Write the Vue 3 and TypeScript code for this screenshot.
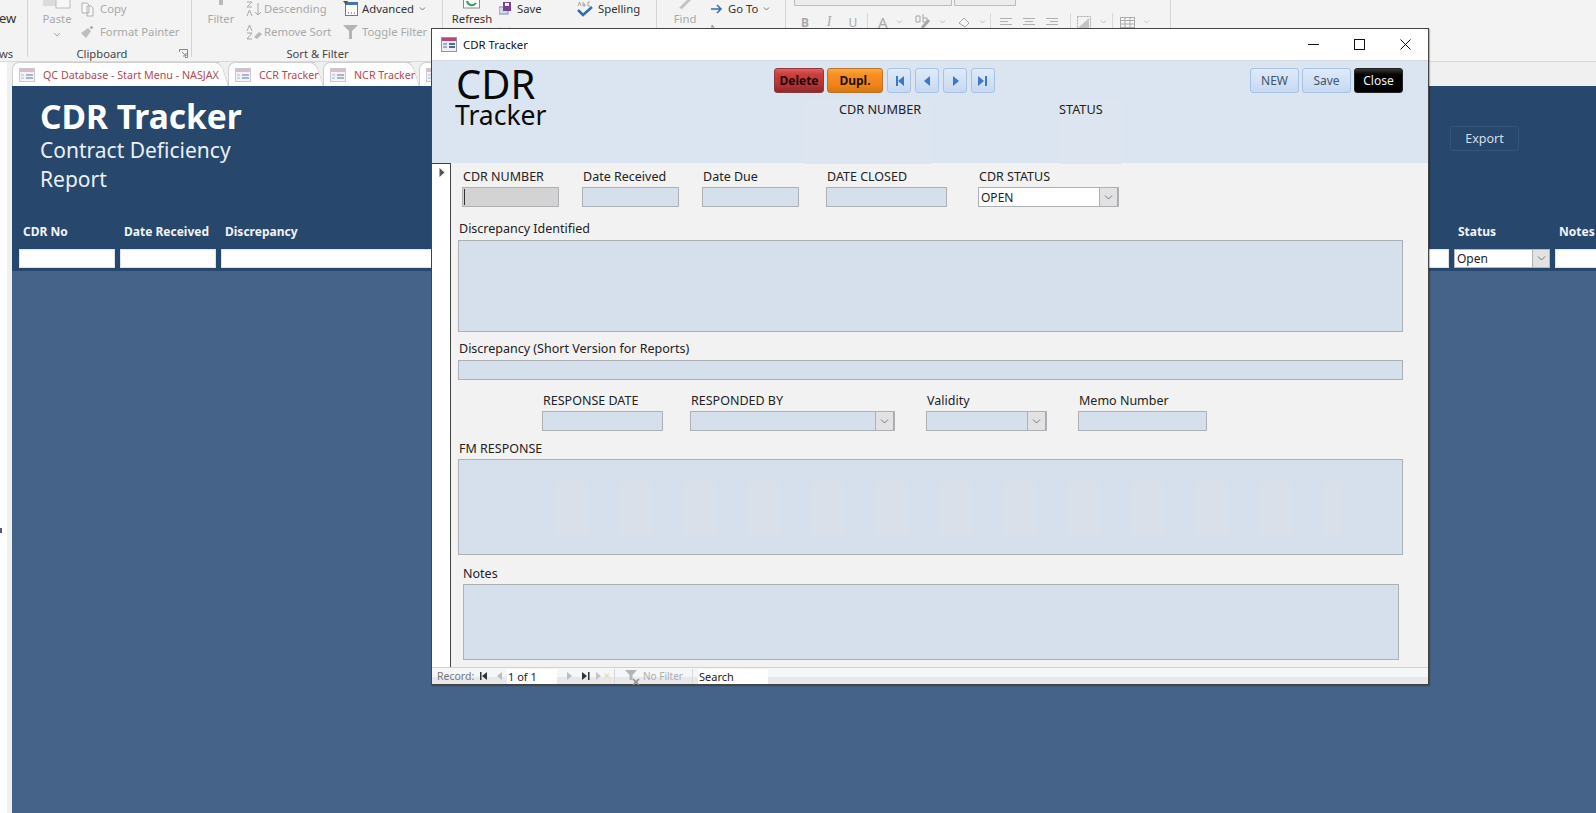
<script setup lang="ts">
interface Tab { label: string; cls: string }
const tabs: Tab[] = [
  { label: 'QC Database - Start Menu - NASJAX', cls: 't1' },
  { label: 'CCR Tracker', cls: 't2' },
  { label: 'NCR Tracker', cls: 't3' },
  { label: '', cls: 't4' },
]
const navIcons: string[] = ['M5 3h2v10H5zM13 3v10L7 8z', 'M11 3v10L5 8z', 'M6 3v10l6-5z', 'M3 3v10l6-5zM10 3h2v10h-2z']
</script>

<template>
  <div class="app">
    <header class="ribbon">
      <section class="group g-views">
        <div class="content"><span class="cut-text dark">ew</span></div>
        <div class="glabel left">ws</div>
      </section>
      <section class="group g-clip">
        <div class="content">
          <div class="bigcol paste">
            <svg class="bigicon" width="28" height="9" viewBox="0 0 28 9"><rect x="0" y="0" width="14" height="6" fill="#dcdcdc"/><rect x="13" y="-4" width="14" height="12" fill="#f7f7f7" stroke="#bcbcbc"/></svg>
            <span class="dis">Paste</span>
            <svg class="chev" width="8" height="5" viewBox="0 0 8 5"><path d="M1 1l3 3 3-3" fill="none" stroke="#aaa"/></svg>
          </div>
          <div class="rows">
            <div class="ritem"><svg class="ic" width="15" height="16" viewBox="0 0 15 16"><path d="M2 2h5l2 2v8H2zM7 5h4l2 2v8H7z" fill="#f8f8f8" stroke="#b0b0b0"/></svg><span class="dis">Copy</span></div>
            <div class="ritem"><svg class="ic" width="15" height="14" viewBox="0 0 15 14"><path d="M1 8l7-5 3 3-5 7z" fill="#bdbdbd"/><path d="M10 2l2-1 1 2-2 1z" fill="#999"/></svg><span class="dis">Format Painter</span></div>
          </div>
        </div>
        <div class="glabel clipl">Clipboard</div>
        <svg class="launcher" width="9" height="9" viewBox="0 0 9 9"><path d="M.5 3V.5H8.500V8.500H6M3 3l4 4M7 4v3H4" fill="none" stroke="#888"/></svg>
      </section>
      <section class="group g-sort">
        <div class="content">
          <div class="bigcol filter">
            <svg class="bigicon" width="10" height="9" viewBox="0 0 10 9"><rect x="3" y="0" width="4" height="5" fill="#b9b9b9"/></svg>
            <span class="dis">Filter</span>
          </div>
          <div class="rows sortrows">
            <div class="ritem"><svg class="ic wide" width="17" height="16" viewBox="0 0 17 16"><path d="M1 1h5L1 6h5M1 15l2.500-6L6 15" fill="none" stroke="#a8a8a8"/><path d="M12 2v12M9 11l3 3 3-3" fill="none" stroke="#a8a8a8"/></svg><span class="dis">Descending</span></div>
            <div class="ritem"><svg class="ic wide" width="17" height="16" viewBox="0 0 17 16"><path d="M1 7l2.500-6L6 7M1 9h5l-5 6h5" fill="none" stroke="#a8a8a8"/><path d="M8 13l5-5 3 2-5 5z" fill="#b8b8b8"/></svg><span class="dis">Remove Sort</span></div>
          </div>
          <div class="rows advrows">
            <div class="ritem"><svg class="ic" width="15" height="15" viewBox="0 0 15 15"><rect x="2.500" y="1.500" width="12" height="13" fill="#fff" stroke="#777"/><rect x="2" y="1" width="13" height="3" fill="#3f74ad"/><path d="M5 12h1M8 12h1M11 12h1" stroke="#444"/><path d="M0 0h5L3 4z" fill="#555"/></svg><span class="dark">Advanced</span><svg class="mini" width="7" height="4" viewBox="0 0 7 4"><path d="M1 .5l2.500 2.500L6 .5" fill="none" stroke="#777"/></svg></div>
            <div class="ritem"><svg class="ic" width="15" height="14" viewBox="0 0 15 14"><path d="M0 0h15L9 6v8H6V6z" fill="#b4b4b4"/></svg><span class="dis">Toggle Filter</span></div>
          </div>
        </div>
        <div class="glabel">Sort &amp; Filter</div>
      </section>
      <section class="group g-rec">
        <div class="content">
          <div class="bigcol refresh">
            <svg class="bigicon" width="18" height="9" viewBox="0 0 18 9"><rect x=".5" y="-4" width="16" height="12" fill="#fff" stroke="#888"/><path d="M4 1a5 5 0 0 0 9 2" fill="none" stroke="#3f9a62" stroke-width="2"/></svg>
            <span class="dark">Refresh</span>
          </div>
          <div class="rows recrows">
            <div class="ritem"><svg class="ic" width="13" height="14" viewBox="0 0 13 14"><rect x="0" y="5" width="9" height="7" fill="#cfdcec" stroke="#7a8fa8"/><rect x="4" y="0" width="8" height="9" fill="#7b3f98"/><rect x="6" y="1" width="4" height="3" fill="#fff"/></svg><span class="dark">Save</span></div>
            <div class="ritem"><svg class="ic" width="13" height="12" viewBox="0 0 13 12"><path d="M1 2l10 8M11 2L1 10" stroke="#c0c0c0" stroke-width="2"/></svg></div>
          </div>
          <div class="rows spellrows">
            <div class="ritem"><svg class="ic" width="16" height="16" viewBox="0 0 16 16"><path d="M1 5l1.500-4L4 5M6 1v4h2V3H6M13 1h-2v4h2" fill="none" stroke="#888" stroke-width=".7"/><path d="M1 9l5 5 9-8" fill="none" stroke="#2f6db5" stroke-width="2.500"/></svg><span class="dark">Spelling</span></div>
            <div class="ritem"><svg class="ic" width="16" height="14" viewBox="0 0 16 14"><rect x=".5" y="3.500" width="15" height="10" fill="#f7f7f7" stroke="#999"/><path d="M1 7h14M6 4v9" stroke="#999"/></svg></div>
          </div>
        </div>
      </section>
      <section class="group g-find">
        <div class="content">
          <div class="bigcol findcol">
            <svg class="bigicon" width="14" height="9" viewBox="0 0 14 9"><path d="M1 8l8-8h4L4 9z" fill="#c2c2c2"/></svg>
            <span class="dis">Find</span>
          </div>
          <div class="rows findrows">
            <div class="ritem"><svg class="ic" width="12" height="10" viewBox="0 0 12 10"><path d="M0 5h10M6 1l4 4-4 4" fill="none" stroke="#2f6db5" stroke-width="1.500"/></svg><span class="dark">Go To</span><svg class="mini" width="7" height="4" viewBox="0 0 7 4"><path d="M1 .5l2.500 2.500L6 .5" fill="none" stroke="#777"/></svg></div>
            <div class="ritem"><svg class="ic" width="12" height="14" viewBox="0 0 12 14"><path d="M1 0v12l3-3 4 1z" fill="#fff" stroke="#888"/></svg></div>
          </div>
        </div>
      </section>
      <section class="group g-text">
        <div class="combos"><i class="c-a"></i><i class="c-b"></i></div>
        <div class="fmt">
          <b class="f-b">B</b><em class="f-i">I</em><u class="f-u">U</u>
          <i class="vsep"></i>
          <span class="f-a">A</span>
          <svg class="mini" width="7" height="4" viewBox="0 0 7 4"><path d="M1 .5l2.500 2.500L6 .5" fill="none" stroke="#bbb"/></svg>
          <svg class="f-ab" width="16" height="16" viewBox="0 0 16 16"><path d="M1 2h4v6H1zM8 0v8h4V4H8" fill="none" stroke="#a5a5a5"/><path d="M7 14l7-8" stroke="#a8a8a8" stroke-width="3"/></svg>
          <svg class="mini" width="7" height="4" viewBox="0 0 7 4"><path d="M1 .5l2.500 2.500L6 .5" fill="none" stroke="#bbb"/></svg>
          <svg class="f-fill" width="14" height="14" viewBox="0 0 14 14"><path d="M2 8l5-5 5 5-4 4z" fill="#f6f6f6" stroke="#a8a8a8"/></svg>
          <svg class="mini" width="7" height="4" viewBox="0 0 7 4"><path d="M1 .5l2.500 2.500L6 .5" fill="none" stroke="#bbb"/></svg>
          <i class="vsep s2"></i>
          <svg class="f-al first" width="12" height="9" viewBox="0 0 12 9"><path d="M0 .5h12M0 3.500h8M0 6.500h12" stroke="#b0b0b0"/></svg>
          <svg class="f-al" width="12" height="9" viewBox="0 0 12 9"><path d="M0 .5h12M2 3.500h8M0 6.500h12" stroke="#b0b0b0"/></svg>
          <svg class="f-al" width="12" height="9" viewBox="0 0 12 9"><path d="M0 .5h12M4 3.500h8M0 6.500h12" stroke="#b0b0b0"/></svg>
          <i class="vsep s3"></i>
          <svg class="f-grid" width="15" height="13" viewBox="0 0 15 13"><rect x=".5" y=".5" width="13" height="12" fill="none" stroke="#aaa" stroke-dasharray="2 1"/><path d="M1 12L12 2v10z" fill="#c4c4c4"/></svg>
          <svg class="mini" width="7" height="4" viewBox="0 0 7 4"><path d="M1 .5l2.500 2.500L6 .5" fill="none" stroke="#bbb"/></svg>
          <i class="vsep s4"></i>
          <svg class="f-tbl" width="15" height="11" viewBox="0 0 15 11"><rect x=".5" y=".5" width="14" height="10" fill="#f6f6f6" stroke="#aaa"/><path d="M1 3.500h13M1 7h13M5 1v9M10 1v9" stroke="#aaa"/></svg>
          <svg class="mini" width="7" height="4" viewBox="0 0 7 4"><path d="M1 .5l2.500 2.500L6 .5" fill="none" stroke="#ccc"/></svg>
        </div>
      </section>
    </header>

    <div class="workspace">
      <aside class="navstrip"><i class="navmark"></i></aside>
      <main class="main">
        <nav class="tabs">
          <div v-for="t in tabs" :key="t.cls" class="tab" :class="t.cls">
            <svg class="tabicon" width="16" height="14" viewBox="0 0 16 14">
              <rect x=".5" y=".5" width="15" height="13" fill="#f2f3f7" stroke="#c9c9d2"/>
              <rect x="1" y="1" width="14" height="3" fill="#e3b9c8"/>
              <path d="M2 7h3M2 10h3" stroke="#a9b6c9"/>
              <rect x="7" y="6" width="7" height="2" fill="#a9b6c9"/>
              <rect x="7" y="9" width="7" height="2" fill="#a9b6c9"/>
            </svg>
            <span>{{ t.label }}</span>
          </div>
        </nav>
        <section class="bluehead">
          <div class="headtop">
            <div class="titles">
              <h1>CDR Tracker</h1>
              <p>Contract Deficiency</p>
              <p>Report</p>
            </div>
            <button class="export">Export</button>
          </div>
          <div class="cols">
            <span>CDR No</span><span>Date Received</span><span>Discrepancy</span><span>Status</span><span>Notes</span>
            <i class="cell"></i><i class="cell"></i><i class="cell"></i>
            <div class="cell statuscell"><span>Open</span><b class="drop"><svg width="9" height="5" viewBox="0 0 9 5"><path d="M1 .5l3.500 3.500L8 .5" fill="none" stroke="#777"/></svg></b></div>
            <i class="cell"></i>
          </div>
        </section>
        <section class="bluebody"></section>
      </main>
    </div>

    <div class="dialog">
      <div class="titlebar">
        <svg width="16" height="15" viewBox="0 0 16 15">
          <rect x=".5" y=".5" width="15" height="14" fill="#eef0f6" stroke="#8c93ad"/>
          <rect x="1" y="1" width="14" height="3" fill="#b44a78"/>
          <path d="M2 7h4M2 10h4" stroke="#4c6a94"/>
          <rect x="8" y="6" width="6" height="2" fill="#4c6a94"/>
          <rect x="8" y="9" width="6" height="2" fill="#4c6a94"/>
        </svg>
        <span class="dtitle">CDR Tracker</span>
        <div class="winctl">
          <svg width="11" height="11" viewBox="0 0 11 11"><path d="M0 5.500h11" stroke="#111"/></svg>
          <svg width="11" height="11" viewBox="0 0 11 11"><rect x=".5" y=".5" width="10" height="10" fill="none" stroke="#111"/></svg>
          <svg width="11" height="11" viewBox="0 0 11 11"><path d="M.5.500l10 10M10.500.500l-10 10" stroke="#111"/></svg>
        </div>
      </div>

      <div class="dhead">
        <div class="brand">
          <div class="b1">CDR</div>
          <div class="b2">Tracker</div>
        </div>
        <div class="hmid">
          <div class="hbtns">
            <button class="btn red">Delete</button>
            <button class="btn orange">Dupl.</button>
            <button v-for="d in navIcons" :key="d" class="btn nav">
              <svg width="16" height="16" viewBox="0 0 16 16"><path :d="d" fill="#3c78c8"/></svg>
            </button>
          </div>
          <div class="hfields">
            <div class="hf hf1">CDR NUMBER</div>
            <div class="hf hf2">STATUS</div>
          </div>
        </div>
        <div class="hright">
          <button class="btn blue">NEW</button>
          <button class="btn blue">Save</button>
          <button class="btn black">Close</button>
        </div>
      </div>

      <div class="dbody">
        <div class="selector"><svg width="6" height="9" viewBox="0 0 6 9"><path d="M.5 0v9L5.500 4.500z" fill="#555"/></svg></div>
        <div class="form">
          <div class="row r1">
            <div class="field w97"><label>CDR NUMBER</label><div class="box grey"><i class="caret"></i></div></div>
            <div class="field w97 g23"><label>Date Received</label><div class="box"></div></div>
            <div class="field w97 g23"><label>Date Due</label><div class="box"></div></div>
            <div class="field w121 g27"><label>DATE CLOSED</label><div class="box"></div></div>
            <div class="field w141 g31">
              <label>CDR STATUS</label>
              <div class="box white combo"><span>OPEN</span><b class="drop"><svg width="9" height="5" viewBox="0 0 9 5"><path d="M1 .5l3.500 3.500L8 .5" fill="none" stroke="#777"/></svg></b></div>
            </div>
          </div>
          <div class="full f-disc"><label>Discrepancy Identified</label><div class="box big1"></div></div>
          <div class="full f-short"><label>Discrepancy (Short Version for Reports)</label><div class="box short"></div></div>
          <div class="row r3">
            <div class="field w121"><label>RESPONSE DATE</label><div class="box"></div></div>
            <div class="field w205 g27"><label>RESPONDED BY</label><div class="box combo"><b class="drop"><svg width="9" height="5" viewBox="0 0 9 5"><path d="M1 .5l3.500 3.500L8 .5" fill="none" stroke="#777"/></svg></b></div></div>
            <div class="field w121 g31"><label>Validity</label><div class="box combo"><b class="drop"><svg width="9" height="5" viewBox="0 0 9 5"><path d="M1 .5l3.500 3.500L8 .5" fill="none" stroke="#777"/></svg></b></div></div>
            <div class="field w129 g31"><label>Memo Number</label><div class="box"></div></div>
          </div>
          <div class="full f-fm"><label>FM RESPONSE</label><div class="box big2"><i class="stripes"></i></div></div>
          <div class="full f-notes"><label>Notes</label><div class="box big3"></div></div>
        </div>
      </div>

      <div class="statusbar">
        <span class="rec">Record:</span>
        <svg class="n1" width="9" height="8" viewBox="0 0 9 8"><path d="M1 0h1.500v8H1zM8 0v8L3 4z" fill="#333"/></svg>
        <svg class="n2" width="6" height="8" viewBox="0 0 6 8"><path d="M5 0v8L0 4z" fill="#bdbdbd"/></svg>
        <div class="recbox">1 of 1</div>
        <svg class="n3" width="6" height="8" viewBox="0 0 6 8"><path d="M0 0v8l5-4z" fill="#bdbdbd"/></svg>
        <svg class="n4" width="9" height="8" viewBox="0 0 9 8"><path d="M0 0v8l5-4zM6 0h1.500v8H6z" fill="#333"/></svg>
        <svg class="n5" width="14" height="8" viewBox="0 0 14 8"><path d="M0 0v8l5-4z" fill="#c4c4c4"/><path d="M9 1l4 6M13 1L9 7M8 4h6" stroke="#ecd9a8"/></svg>
        <i class="bsep b1sep"></i>
        <svg class="nf" width="16" height="15" viewBox="0 0 16 15"><path d="M0 0h12L7.500 5v5h-3V5z" fill="#b4b4b4"/><path d="M8 9l6 6M14 9l-6 6" stroke="#8a8a8a" stroke-width="1.500"/></svg>
        <span class="nofilter">No Filter</span>
        <i class="bsep"></i>
        <div class="searchbox">Search</div>
      </div>
    </div>
  </div>
</template>

<style>
html, body { margin: 0; padding: 0; background: #f3f3f3; overflow: hidden; }
</style>

<style scoped>
.app { width: 1596px; height: 813px; position: relative; overflow: hidden; display: flex; flex-direction: column; font-family: "Noto Sans", "Open Sans", sans-serif; background: #f3f3f3; color: #222; }
button { font-family: inherit; padding: 0; cursor: default; }
i { display: block; font-style: normal; }

/* ribbon */
.ribbon { height: 62px; flex: none; display: flex; background: #f3f3f3; border-bottom: 1px solid #d9d9d9; box-sizing: border-box; overflow: hidden; font-size: 11.3px; }
.group { position: relative; height: 61px; box-sizing: border-box; flex: none; display: flex; flex-direction: column; }
.group::after { content: ""; position: absolute; top: 0; right: 0; width: 1px; height: 57px; background: #d4d4d4; }
.g-views { width: 28px; overflow: hidden; }
.g-clip { width: 164px; }
.g-sort { width: 251px; }
.g-rec { width: 214px; }
.g-find { width: 129px; }
.g-text { width: 385px; display: block; }
.content { display: flex; height: 46px; margin-top: -3px; }
.glabel { text-align: center; color: #444; font-size: 11.2px; line-height: 14px; height: 14px; margin-top: auto; }
.glabel.left { text-align: left; margin-left: -1px; }
.clipl { padding-right: 16px; }
.cut-text { font-size: 13px; line-height: 42px; margin-left: -1px; }
.dark { color: #333; }
.dis { color: #a9a9a9; }
.bigcol { display: flex; flex-direction: column; align-items: center; position: relative; }
.bigicon { margin-top: 3px; height: 9px; flex: none; margin-bottom: 1px; }
.bigcol span { line-height: 16px; margin-top: 1px; }
.chev { margin-top: 5px; }
.paste { width: 42px; margin-left: 8px; }
.filter { width: 42px; margin-left: 8px; }
.refresh { width: 50px; margin-left: 4px; }
.findcol { width: 40px; margin-left: 8px; }
.rows { display: flex; flex-direction: column; }
.ritem { height: 23px; display: flex; align-items: center; white-space: nowrap; }
.ic { flex: none; margin-right: 5px; }
.ic.wide { margin-right: 1px; }
.mini { flex: none; margin-left: 5px; }
.g-clip .rows { margin-left: 2px; }
.sortrows { margin-left: 4px; width: 97px; }
.advrows .ic { margin-right: 4px; }
.recrows { margin-left: 2px; width: 78px; }
.findrows { margin-left: 6px; }
.combos { display: flex; gap: 2px; padding-left: 8px; height: 6px; margin-top: -1px; }
.combos i { height: 5px; border: 1px solid #bdbdbd; background: #ececec; box-sizing: content-box; }
.c-a { width: 156px; }
.c-b { width: 60px; }
.fmt { display: flex; align-items: center; height: 22px; margin-top: 6px; color: #aaa; font-size: 12px; padding-left: 14px; }
.fmt b, .fmt em, .fmt u { width: 10px; text-align: center; }
.f-i { margin-left: 14px; font-family: "Liberation Serif", serif; font-size: 14px; }
.f-u { margin-left: 14px; }
.f-a { font-size: 15px; margin-left: 10px; }
.vsep { width: 1px; height: 18px; background: #d8d8d8; margin-left: 9px; }
.f-ab { margin-left: 12px; }
.fmt .mini { margin-left: 8px; }
.f-fill { margin-left: 11px; }
.vsep.s2 { margin-left: 4px; }
.f-al { margin-left: 11px; }
.f-al.first { margin-left: 9px; }
.vsep.s3 { margin-left: 12px; }
.f-grid { margin-left: 6px; }
.vsep.s4 { margin-left: 5px; }
.f-tbl { margin-left: 7px; }
.launcher { position: absolute; right: 4px; bottom: 3px; }

/* workspace */
.workspace { flex: 1; display: flex; min-height: 0; }
.navstrip { width: 7px; background: #fff; border-right: 5px solid #eef0f2; flex: none; position: relative; }
.navmark { position: absolute; left: 0; top: 466px; width: 2px; height: 5px; background: #555a80; }
.main { flex: 1; min-width: 0; display: flex; flex-direction: column; }
.tabs { height: 24px; flex: none; display: flex; background: #f0f0f0; box-sizing: border-box; }
.tab { position: relative; height: 24px; display: flex; align-items: center; box-sizing: border-box; background: #fff; border: 1px solid #cfcfcf; border-bottom: none; border-right: none; border-radius: 7px 0 0 0; color: #b5494c; font-size: 10.7px; white-space: nowrap; padding-left: 6px; flex: none; margin-right: 8px; }
.tab::after { content: ""; position: absolute; top: -1px; bottom: 0; right: -5px; width: 10px; background: #fff; border-top: 1px solid #cfcfcf; border-right: 1px solid #cfcfcf; border-radius: 0 7px 0 0; transform: skewX(18deg); }
.tab span { position: relative; z-index: 1; }
.tabicon { flex: none; margin-right: 8px; }
.t1 { width: 208px; }
.t2 { width: 87px; }
.t3 { width: 88px; }
.t4 { width: 60px; }

.bluehead { height: 185px; flex: none; background: #28476c; display: flex; flex-direction: column; box-sizing: border-box; color: #fff; overflow: hidden; }
.headtop { display: flex; justify-content: space-between; height: 136px; flex: none; }
.titles { padding: 10px 0 0 28px; }
h1 { margin: 0; font-size: 33.5px; line-height: 40px; font-weight: 700; }
.titles p { margin: 0; font-size: 21px; line-height: 29px; color: #eaf0f6; }
.export { margin: 40px 77px 0 0; width: 69px; height: 25px; background: #28476c; color: #d5dfea; border: 1px solid #33557c; border-radius: 3px; font-size: 12.5px; }
.cols { display: grid; grid-template-columns: 96px 96px 1228px 96px 60px; column-gap: 5px; padding-left: 7px; }
.cols > span { font-size: 12px; font-weight: 700; line-height: 20px; height: 27px; padding: 0 0 0 4px; color: #f1f4f8; }
.cell { height: 19px; background: #fff; border: 1px solid #dfe3e8; box-sizing: border-box; }
.statuscell { display: flex; align-items: center; justify-content: space-between; color: #222; font-size: 12px; padding-left: 2px; border-color: #b8b8b8; }
.drop { width: 16px; align-self: stretch; flex: none; background: #e2e2e2; border-left: 1px solid #b0b0b0; display: flex; align-items: center; justify-content: center; }
.bluebody { flex: 1; background: #456288; }

/* dialog */
.dialog { position: absolute; left: 431px; top: 28px; width: 998px; height: 657px; box-sizing: border-box; border: 1px solid #444; background: #f2f2f2; display: flex; flex-direction: column; box-shadow: 1px 1px 1px rgba(0,0,0,.25); }
.titlebar { height: 32px; flex: none; background: #fff; display: flex; align-items: center; padding-left: 9px; border-bottom: 1px solid #d2dbe6; box-sizing: border-box; }
.dtitle { margin-left: 6px; font-size: 11.4px; color: #111; }
.winctl { margin-left: auto; display: flex; gap: 35px; margin-right: 17px; }
.dhead { height: 102px; flex: none; background: #dbe5f1; display: flex; position: relative; }
.brand { width: 342px; padding: 0 0 0 24px; box-sizing: border-box; color: #0a0a0a; flex: none; }
.b1 { font-size: 40px; line-height: 34px; height: 34px; margin-top: 6px; }
.b2 { font-size: 26.5px; line-height: 28px; height: 28px; margin-left: -1px; }
.hmid { flex: none; width: 476px; }
.hbtns { display: flex; align-items: center; padding-top: 7px; }
.btn { height: 25px; box-sizing: border-box; border-radius: 3px; font-size: 12px; flex: none; }
.red { width: 50px; background: linear-gradient(#ee5a5e, #c8413f 22%, #b33234 70%, #8d2a2c); border: 1px solid #8d3a3c; font-weight: 700; color: #1b0505; }
.orange { width: 56px; margin-left: 3px; background: linear-gradient(#ffa83f, #f98f23 25%, #f0831a 70%, #d9760f); border: 1px solid #b8752a; font-weight: 700; color: #1b1000; }
.nav { width: 24px; margin-left: 4px; background: linear-gradient(#dfeafa, #c6d9f2); border: 1px solid #a8c2e4; display: flex; align-items: center; justify-content: center; }
.hfields { display: flex; margin-top: 7px; }
.hf { font-size: 12.7px; line-height: 18px; color: #222; height: 64px; background: #dde5f0; box-sizing: border-box; }
.hf1 { width: 128px; margin-left: 29px; padding-left: 36px; white-space: nowrap; }
.hf2 { width: 63px; margin-left: 128px; }
.hright { display: flex; gap: 3px; position: absolute; right: 25px; top: 7px; }
.blue { width: 49px; background: linear-gradient(#dfeafa, #c6d9f2); border: 1px solid #a8c2e4; color: #44546a; }
.black { width: 49px; background: linear-gradient(#3a3a3a, #000 25%, #000); border: 1px solid #222; color: #f3f3f3; }

.dbody { flex: 1; min-height: 0; display: flex; }
.selector { width: 19px; flex: none; background: #fff; border-top: 1px solid #444; border-right: 1px solid #444; padding: 4px 0 0 7px; box-sizing: border-box; line-height: 0; }
.form { flex: 1; min-width: 0; padding: 4px 0 0 0; box-sizing: border-box; font-size: 12.5px; color: #222; }
label { display: block; line-height: 20px; height: 18px; white-space: nowrap; }
.row { display: flex; }
.r1 { padding-left: 11px; }
.r1 label { padding-left: 1px; margin-bottom: 2px; }
.r3 { padding-left: 91px; margin-top: 11px; }
.r3 label { padding-left: 1px; margin-bottom: 2px; }
.field { flex: none; }
.w97 { width: 97px; }
.w121 { width: 121px; }
.w129 { width: 129px; }
.w141 { width: 141px; }
.w205 { width: 205px; }
.g23 { margin-left: 23px; }
.g27 { margin-left: 27px; }
.g31 { margin-left: 31px; }
.box { height: 20px; box-sizing: border-box; background: #d6e0ec; border: 1px solid #adb1b5; position: relative; }
.grey { background: #d3d3d3; }
.white { background: #fff; }
.caret { position: absolute; left: 1px; top: 1px; width: 1px; height: 16px; background: #333; }
.combo { display: flex; justify-content: space-between; align-items: center; font-size: 12px; padding-left: 2px; }
.combo .drop { margin-left: auto; width: 17px; border-right: 1px solid #aaa; }
.full { margin-left: 7px; width: 945px; }
.f-disc { margin-top: 12px; }
.f-disc label { padding-left: 1px; margin-bottom: 3px; }
.big1 { height: 92px; }
.f-short { margin-top: 7px; }
.f-short label { padding-left: 1px; margin-bottom: 3px; }
.f-fm { margin-top: 8px; }
.f-fm label { padding-left: 1px; margin-bottom: 2px; }
.big2 { height: 96px; overflow: hidden; }
.stripes { position: absolute; left: 97px; right: 60px; top: 22px; bottom: 18px; background: repeating-linear-gradient(90deg, #d9e0ea 0 32px, #d6e0ec 32px 64px); }
.f-notes { margin-top: 9px; margin-left: 12px; width: 936px; }
.f-notes label { margin-bottom: 2px; }
.big3 { height: 76px; }

.statusbar { height: 17px; flex: none; display: flex; align-items: center; background: linear-gradient(#f4f6f8 0 58%, #e6e8ea 58%); border-top: 1px solid #cfd2d5; box-sizing: border-box; font-size: 10.5px; position: relative; }
.rec { margin-left: 5px; color: #777; width: 42px; flex: none; }
.n1 { flex: none; }
.n2 { flex: none; margin-left: 9px; }
.recbox { width: 50px; height: 15px; margin-left: 4px; background: #fff; color: #222; font-size: 11px; line-height: 15px; padding-left: 1px; box-sizing: border-box; align-self: flex-end; flex: none; }
.n3 { flex: none; margin-left: 10px; }
.n4 { flex: none; margin-left: 9px; }
.n5 { flex: none; margin-left: 5px; }
.bsep { width: 1px; height: 15px; background: #d6d8da; flex: none; }
.b1sep { margin-left: 4px; }
.nf { flex: none; margin-left: 10px; align-self: flex-end; margin-bottom: -1px; }
.nofilter { margin-left: 2px; color: #aeaeae; font-size: 10px; flex: none; width: 49px; }
.searchbox { width: 70px; height: 15px; margin-left: 5px; background: #fff; color: #222; font-size: 11px; line-height: 15px; padding-left: 1px; box-sizing: border-box; align-self: flex-end; flex: none; }
</style>
